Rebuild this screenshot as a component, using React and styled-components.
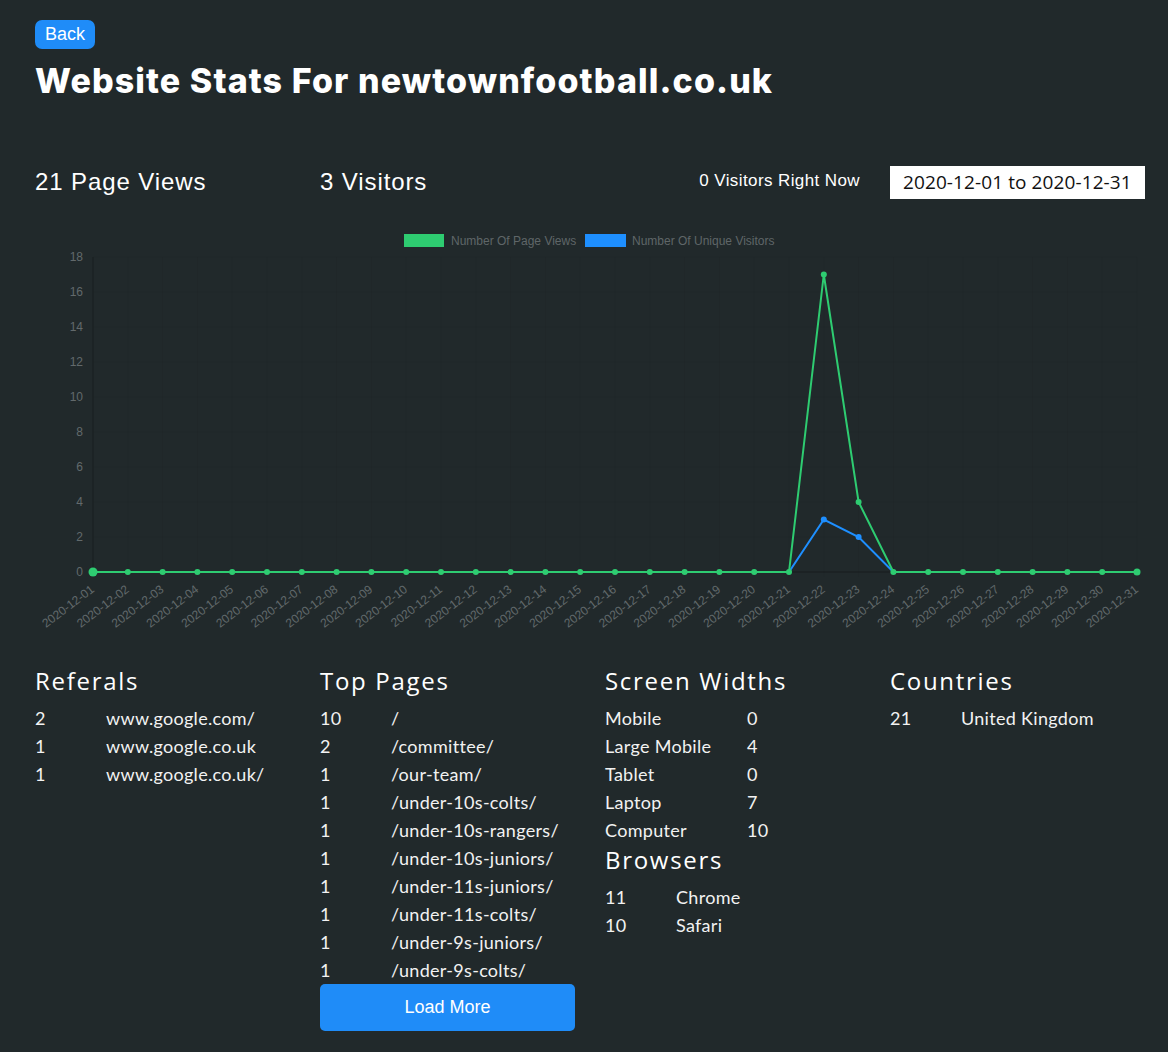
import React from 'react'
import styled, { createGlobalStyle } from 'styled-components'

const dates = Array.from({ length: 31 }, (_, i) => `2020-12-${String(i + 1).padStart(2, '0')}`)
const pageViews = dates.map((d) => (d === '2020-12-22' ? 17 : d === '2020-12-23' ? 4 : 0))
const visitors = dates.map((d) => (d === '2020-12-22' ? 3 : d === '2020-12-23' ? 2 : 0))

const referals = [
    ['2', 'www.google.com/'],
    ['1', 'www.google.co.uk'],
    ['1', 'www.google.co.uk/'],
]

const topPages = [
    ['10', '/'],
    ['2', '/committee/'],
    ['1', '/our-team/'],
    ['1', '/under-10s-colts/'],
    ['1', '/under-10s-rangers/'],
    ['1', '/under-10s-juniors/'],
    ['1', '/under-11s-juniors/'],
    ['1', '/under-11s-colts/'],
    ['1', '/under-9s-juniors/'],
    ['1', '/under-9s-colts/'],
]

const screenWidths = [
    ['Mobile', '0'],
    ['Large Mobile', '4'],
    ['Tablet', '0'],
    ['Laptop', '7'],
    ['Computer', '10'],
]

const browsers = [
    ['11', 'Chrome'],
    ['10', 'Safari'],
]

const countries = [['21', 'United Kingdom']]

// chart geometry (svg coords)
const LEFT = 58
const RIGHT = 1102
const ZERO = 347
const UNIT = 17.5
const step = (RIGHT - LEFT) / 30
const px = (i) => LEFT + i * step
const py = (v) => ZERO - v * UNIT

function Chart() {
    const green = '#2ecc71'
    const blue = '#1e8fff'
    const line = (data) => data.map((v, i) => `${i ? 'L' : 'M'}${px(i)},${py(v)}`).join(' ')
    return (
        <ChartSvg width="1110" height="405" viewBox="0 0 1110 405">
            <rect x="369" y="9" width="40" height="13" fill={green} />
            <LegendText x="416" y="20">Number Of Page Views</LegendText>
            <rect x="550" y="9" width="41" height="13" fill={blue} />
            <LegendText x="597" y="20">Number Of Unique Visitors</LegendText>

            {Array.from({ length: 10 }, (_, k) => (
                <g key={k}>
                    <line x1={LEFT} x2={RIGHT} y1={py(k * 2)} y2={py(k * 2)} stroke={k === 0 ? 'rgba(0,0,0,0.3)' : 'rgba(0,0,0,0.035)'} />
                    <AxisText x="48" y={py(k * 2) + 4} textAnchor="end">{k * 2}</AxisText>
                </g>
            ))}
            {dates.map((d, i) => (
                <line key={d} x1={px(i)} x2={px(i)} y1={py(18)} y2={ZERO + 5} stroke={i === 0 ? 'rgba(0,0,0,0.25)' : 'rgba(0,0,0,0.03)'} />
            ))}
            {dates.map((d, i) => (
                <AxisText key={d} textAnchor="end" transform={`translate(${px(i) + 2},${ZERO + 19}) rotate(-37)`}>{d}</AxisText>
            ))}

            <path d={line(visitors)} fill="none" stroke={blue} strokeWidth="2" />
            {visitors.map((v, i) => v > 0 && <circle key={i} cx={px(i)} cy={py(v)} r="3" fill={blue} />)}
            <path d={line(pageViews)} fill="none" stroke={green} strokeWidth="2" />
            {pageViews.map((v, i) => (
                <circle key={i} cx={px(i)} cy={py(v)} r={i === 0 ? 4.5 : i === 30 ? 3.5 : 3} fill={green} />
            ))}
        </ChartSvg>
    )
}

function DataRows({ rows, first }) {
    return rows.map(([a, b], i) => (
        <Row key={i} $first={first}>
            <span>{a}</span>
            <span>{b}</span>
        </Row>
    ))
}

export default function App() {
    return (
        <>
            <GlobalStyle />
            <Page>
                <BackButton>Back</BackButton>
                <Title>Website Stats For newtownfootball.co.uk</Title>
                <StatsRow>
                    <BigStat>21 Page Views</BigStat>
                    <BigStat>3 Visitors</BigStat>
                    <NowStat>0 Visitors Right Now</NowStat>
                    <DateBox>2020-12-01 to 2020-12-31</DateBox>
                </StatsRow>
                <Chart />
                <Sections>
                    <Section>
                        <Heading>Referals</Heading>
                        <DataRows rows={referals} />
                    </Section>
                    <Section>
                        <Heading>Top Pages</Heading>
                        <DataRows rows={topPages} />
                        <LoadMore>Load More</LoadMore>
                    </Section>
                    <Section>
                        <Heading>Screen Widths</Heading>
                        <DataRows rows={screenWidths} first="142px" />
                        <Heading>Browsers</Heading>
                        <DataRows rows={browsers} />
                    </Section>
                    <Section>
                        <Heading>Countries</Heading>
                        <DataRows rows={countries} />
                    </Section>
                </Sections>
            </Page>
        </>
    )
}

const GlobalStyle = createGlobalStyle`
    body {
        margin: 0;
        background: #21292b;
        color: #fff;
        font-family: "Liberation Sans", Arial, sans-serif;
    }
`

const Page = styled.div`
    padding: 20px 23px 20px 35px;
    width: 1110px;
`

const BackButton = styled.button`
    display: block;
    height: 29px;
    width: 60px;
    padding: 0;
    border: none;
    border-radius: 7px;
    background: #1f8cf8;
    color: #fff;
    font-family: "Liberation Sans", Arial, sans-serif;
    font-size: 18px;
`

const Title = styled.h1`
    margin: 12px 0 0;
    font-family: Inter, "Open Sans", sans-serif;
    font-weight: 800;
    font-size: 34px;
    line-height: 40px;
    letter-spacing: 1.1px;
`

const StatsRow = styled.div`
    display: grid;
    grid-template-columns: 285px 285px 285px 1fr;
    align-items: center;
    margin-top: 65px;
    height: 33px;
`

const BigStat = styled.div`
    font-size: 24px;
    letter-spacing: 0.9px;
    margin-top: -2px;
`

const NowStat = styled.div`
    font-size: 17px;
    letter-spacing: 0.4px;
    text-align: right;
    padding-right: 30px;
    margin-top: -4px;
`

const DateBox = styled.div`
    height: 33px;
    background: #fff;
    color: #111;
    font-family: "Open Sans", sans-serif;
    font-size: 19px;
    letter-spacing: 0.1px;
    line-height: 33px;
    padding-left: 13px;
`

const ChartSvg = styled.svg`
    display: block;
    margin-top: 26px;
`

const LegendText = styled.text`
    font-family: "Liberation Sans", Arial, sans-serif;
    font-size: 12px;
    fill: #5f6668;
`

const AxisText = styled.text`
    font-family: "Liberation Sans", Arial, sans-serif;
    font-size: 12px;
    fill: #62696b;
`

const Sections = styled.div`
    display: grid;
    grid-template-columns: 285px 285px 285px 1fr;
    margin-top: 35px;
`

const Section = styled.div`
    display: flex;
    flex-direction: column;
`

const Heading = styled.h3`
    margin: 0 0 7px;
    font-family: "Open Sans", sans-serif;
    font-weight: 500;
    font-size: 24px;
    line-height: 32px;
    letter-spacing: 1.7px;
`

const Row = styled.div`
    display: grid;
    grid-template-columns: ${(p) => p.$first || '71px'} 1fr;
    height: 28px;
    line-height: 28px;
    font-family: Lato, sans-serif;
    font-size: 18px;
    letter-spacing: 0.3px;
    color: #f2f2f2;
`

const LoadMore = styled.button`
    width: 255px;
    height: 47px;
    border: none;
    border-radius: 5px;
    background: #1f8cf8;
    color: #fff;
    font-family: "Liberation Sans", Arial, sans-serif;
    font-size: 18px;
`
